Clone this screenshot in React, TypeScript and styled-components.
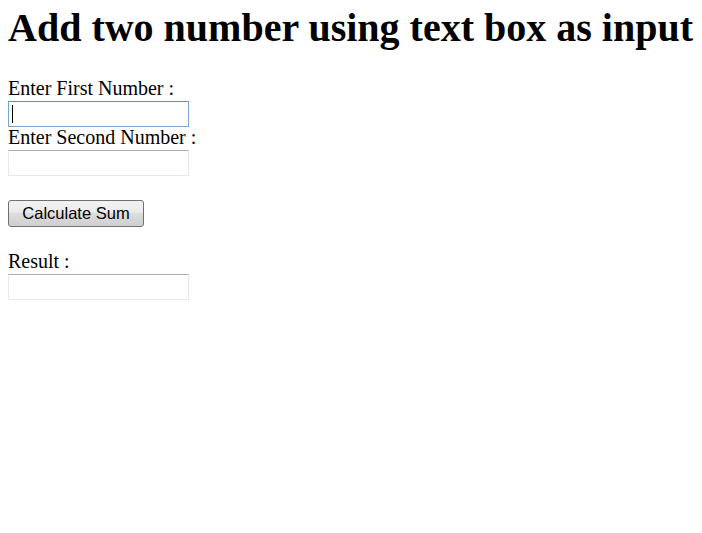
import React from 'react';
import styled, { createGlobalStyle } from 'styled-components';

const GlobalStyle = createGlobalStyle`
  html, body {
    background: #ffffff;
  }
  body {
    margin: 8px;
    font-family: "Liberation Serif", "Times New Roman", serif;
    color: #000000;
  }
`;

const Title = styled.h1`
  margin: 1px 0 32px;
  font-size: 40px;
  line-height: 37px;
  font-weight: bold;
  white-space: nowrap;
`;

const Form = styled.form`
  display: flex;
  flex-direction: column;
  align-items: flex-start;
`;

const Label = styled.label`
  display: block;
  font-size: 20px;
  line-height: 20px;
  padding-bottom: 3px;
`;

const Field = styled.div<{ $gapAfter?: number }>`
  position: relative;
  margin-bottom: ${({ $gapAfter }) => $gapAfter ?? 0}px;
`;

const TextBox = styled.input<{ $focused?: boolean }>`
  display: block;
  box-sizing: border-box;
  width: 181px;
  height: 26px;
  margin: 0;
  padding: 2px 3px;
  font-family: "Liberation Sans", Arial, sans-serif;
  font-size: 15px;
  background: #ffffff;
  border: 1px solid ${({ $focused }) => ($focused ? '#7da2ce' : '#e3e9ef')};
  border-top-color: ${({ $focused }) => ($focused ? '#5794bf' : '#abadb3')};
  border-radius: 0;
  outline: none;
`;

const Caret = styled.span`
  position: absolute;
  left: 4px;
  top: 4px;
  width: 1px;
  height: 18px;
  background: #000000;
`;

const Button = styled.button`
  box-sizing: border-box;
  width: 136px;
  height: 27px;
  margin: 0 0 24px;
  padding: 0 6px;
  font-family: "Liberation Sans", Arial, sans-serif;
  font-size: 16.5px;
  color: #000000;
  background: linear-gradient(to bottom, #f2f2f2 0%, #ebebeb 45%, #dddddd 50%, #cfcfcf 100%);
  border: 1px solid #707070;
  border-radius: 3px;
  cursor: pointer;
`;

const App: React.FC = () => {
  return (
    <>
      <GlobalStyle />
      <Title>Add two number using text box as input</Title>
      <Form onSubmit={(e) => e.preventDefault()}>
        <Label htmlFor="first">Enter First Number :</Label>
        <Field>
          <TextBox id="first" type="text" $focused />
          <Caret />
        </Field>
        <Label htmlFor="second">Enter Second Number :</Label>
        <Field $gapAfter={24}>
          <TextBox id="second" type="text" />
        </Field>
        <Button type="button">Calculate Sum</Button>
        <Label htmlFor="result">Result :</Label>
        <Field>
          <TextBox id="result" type="text" readOnly />
        </Field>
      </Form>
    </>
  );
};

export default App;
